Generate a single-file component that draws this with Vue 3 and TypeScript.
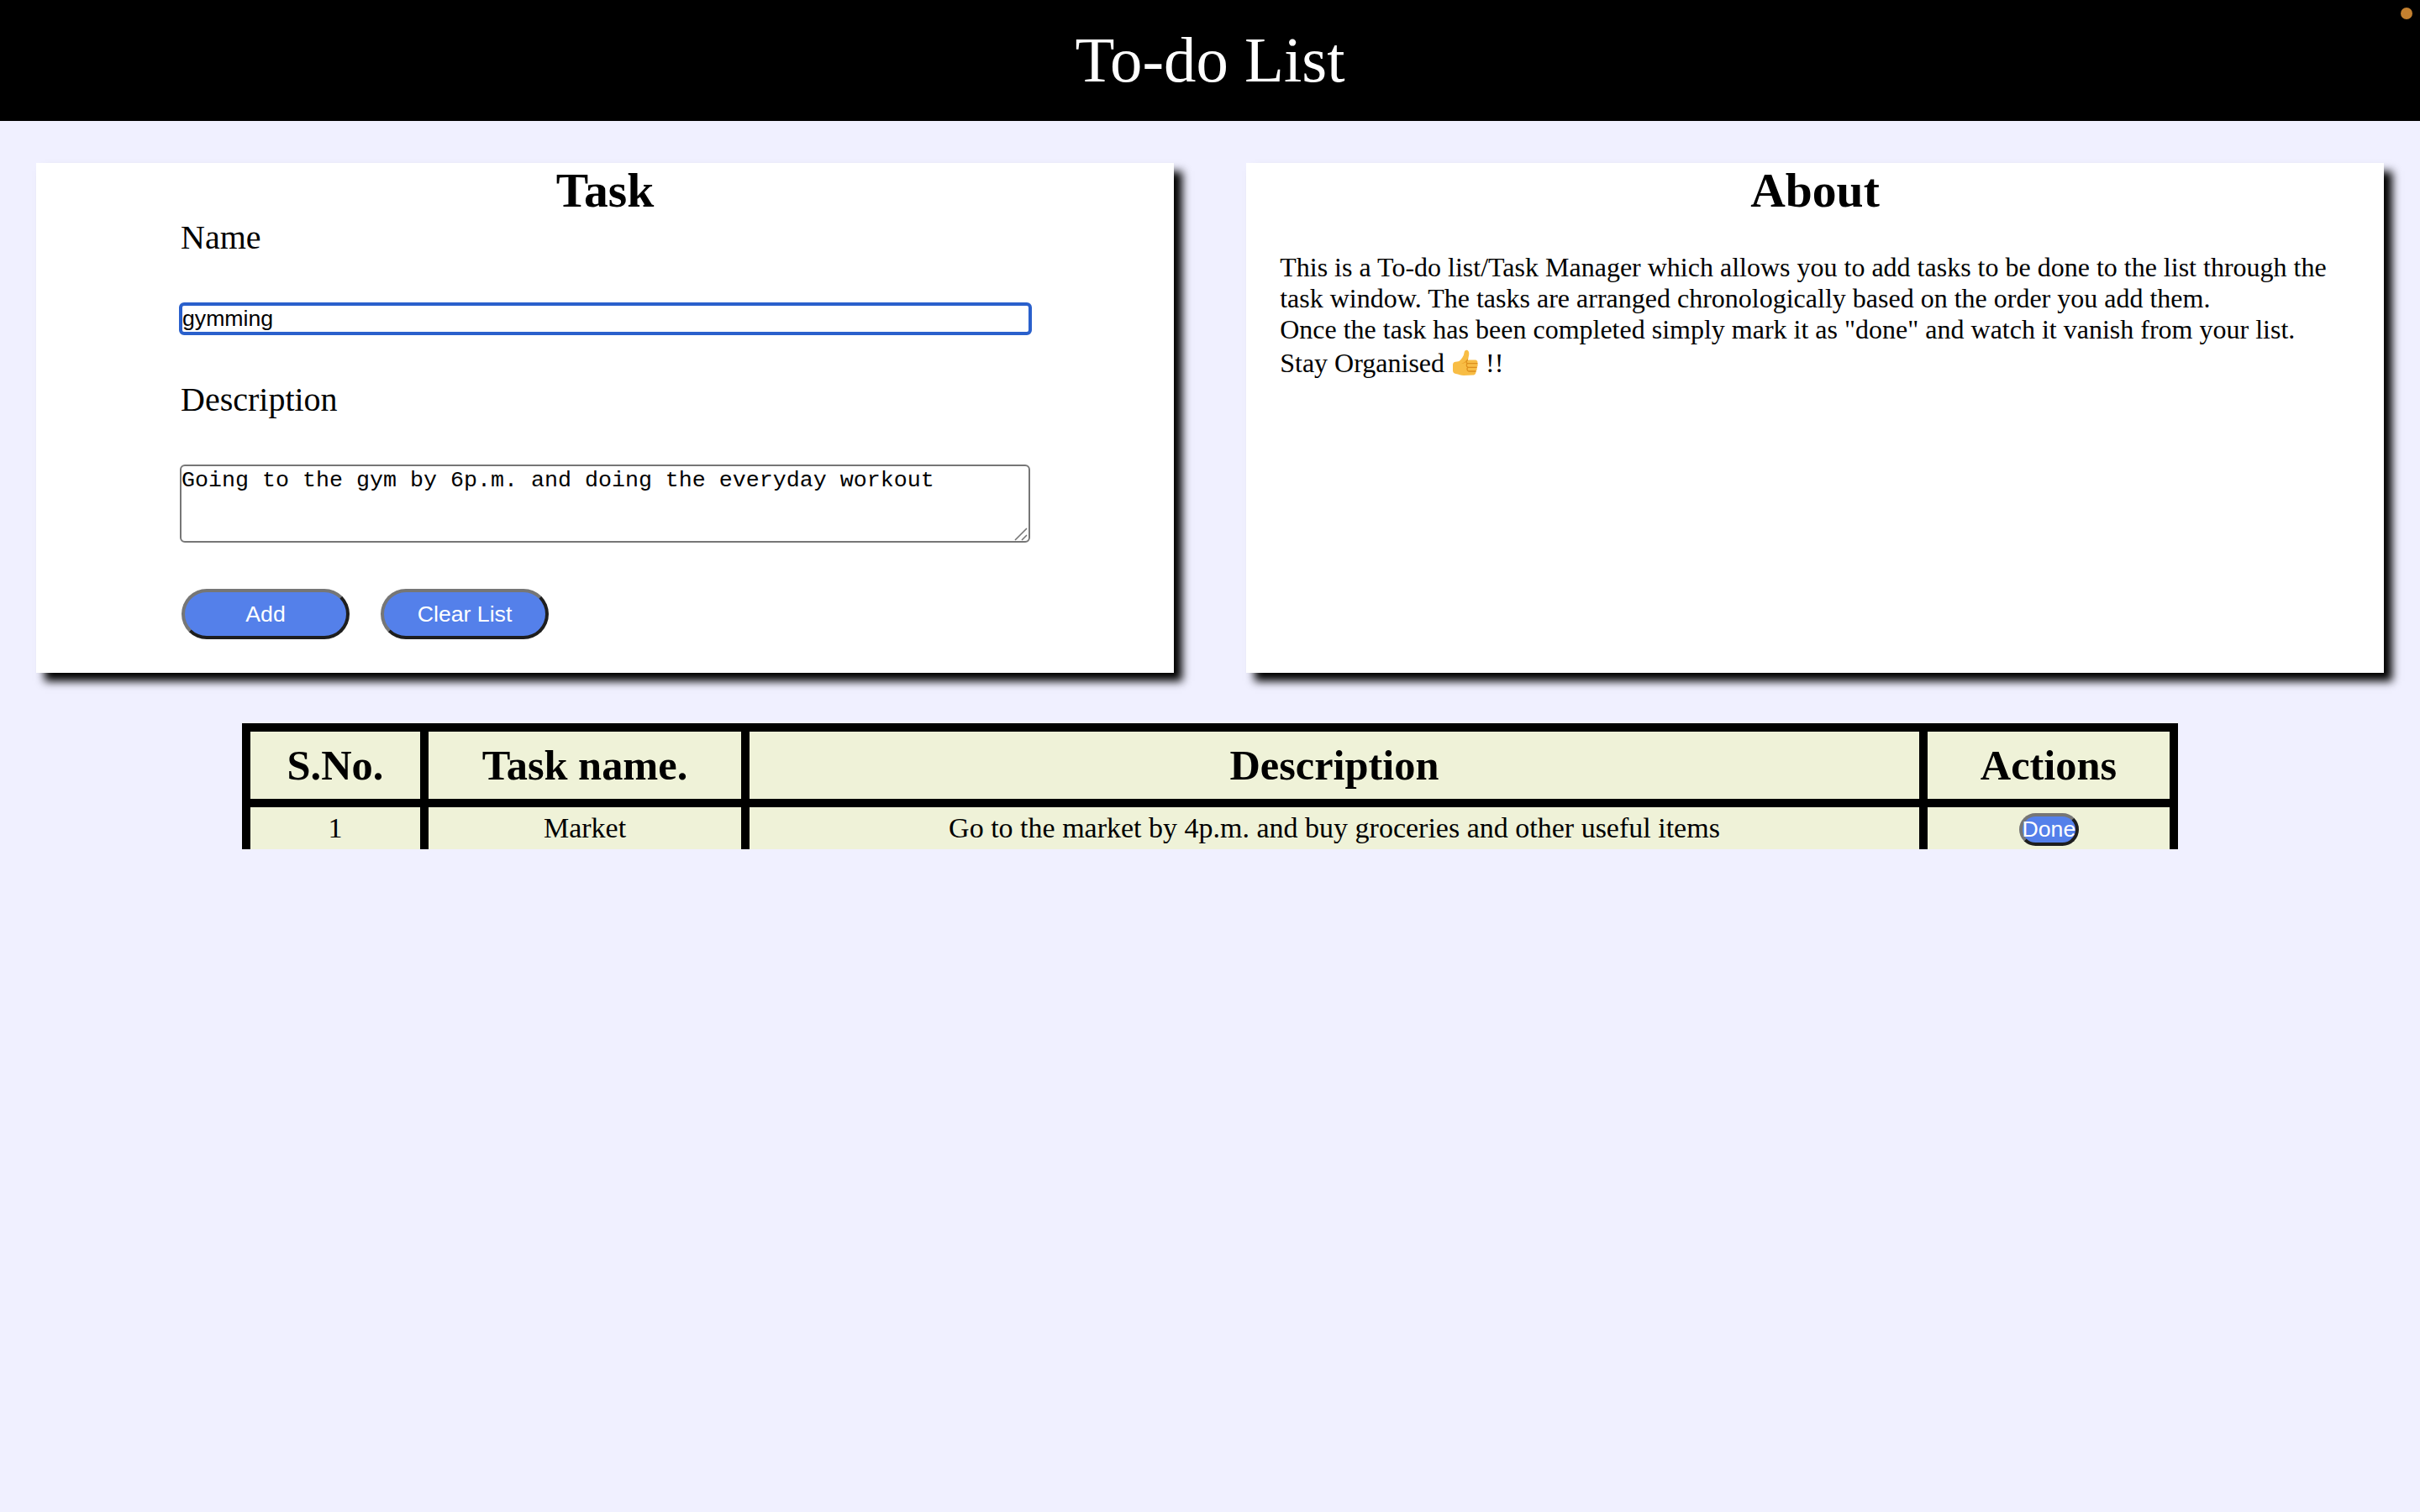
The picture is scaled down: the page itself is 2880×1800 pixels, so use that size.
<script setup lang="ts">
interface Task {
  id: number
  name: string
  description: string
}

const tasks: Task[] = [
  { id: 1, name: 'Market', description: 'Go to the market by 4p.m. and buy groceries and other useful items' }
]
</script>

<template>
  <div class="page">
    <header class="top">
      <h1>To-do List</h1>
      <span class="dot"></span>
    </header>

    <section class="cards">
      <div class="card">
        <h2>Task</h2>
        <form class="form" @submit.prevent>
          <label for="name">Name</label>
          <input id="name" class="name" type="text" value="gymming" />
          <label for="desc">Description</label>
          <div class="desc-box">
            <textarea id="desc" class="desc">Going to the gym by 6p.m. and doing the everyday workout</textarea>
            <svg class="grip" viewBox="0 0 16 16" width="16" height="16" aria-hidden="true">
              <path fill="none" stroke="#767676" stroke-width="1.600" d="M1 15L15 1M9 15L15 9" />
            </svg>
          </div>
          <div class="buttons">
            <button class="pill" type="button">Add</button>
            <button class="pill" type="button">Clear List</button>
          </div>
        </form>
      </div>

      <div class="card">
        <h2>About</h2>
        <p class="about">
          This is a To-do list/Task Manager which allows you to add tasks to be done to the list through the task window. The tasks are arranged chronologically based on the order you add them.<br />
          Once the task has been completed simply mark it as "done" and watch it vanish from your list.
          <span class="stay">Stay Organised
            <svg class="thumb" viewBox="0 0 31 32" width="31" height="32" role="img" aria-label="thumbs up">
              <path fill="#f8bd45" d="M1 18C1 15.500 3 14.500 6 14.500L8.500 14C11.500 11.500 14 8 14.500 4C15 1 17 0 18.800 1.200C20.800 2.600 20.500 6.500 19.500 9.500L18.800 12.500L27 12.500C30 12.500 31 14.500 30.200 16.500C31 18.300 30.800 20.300 29.400 21.300C30.200 23.300 29.600 25 28.300 26C28.900 28.500 27.200 30.500 25 30.500L14 31C10.500 31 8 29.500 4.500 29C2.200 28.500 1 27.200 1 25Z" />
              <path fill="#eea32a" d="M19.500 9.500C17.500 13 15 15.500 11 17C14 17 17 15.500 18.800 12.500Z" />
              <path fill="none" stroke="#dd8f1c" stroke-width="1.300" stroke-linecap="round" d="M18.500 12.800C16.800 13.400 16.500 16 18.500 16.700L30 16.700M18.500 16.700C16.800 17.500 16.800 20.500 19 21.300L29.300 21.300M19 21.300C17.500 22 17.500 25.300 19.800 26L28.200 26" />
            </svg>
            !!</span>
        </p>
      </div>
    </section>

    <section class="table-wrap">
      <table class="list">
        <colgroup>
          <col class="c1" />
          <col class="c2" />
          <col class="c3" />
          <col class="c4" />
        </colgroup>
        <thead>
          <tr>
            <th>S.No.</th>
            <th>Task name.</th>
            <th>Description</th>
            <th>Actions</th>
          </tr>
        </thead>
        <tbody>
          <tr v-for="task in tasks" :key="task.id">
            <td><span class="cell-text">{{ task.id }}</span></td>
            <td><span class="cell-text">{{ task.name }}</span></td>
            <td><span class="cell-text">{{ task.description }}</span></td>
            <td><button class="pill done" type="button">Done</button></td>
          </tr>
        </tbody>
      </table>
    </section>
  </div>
</template>

<style>
html,
body {
  margin: 0;
  background: #f0f0ff;
}
</style>

<style scoped>
.page {
  min-height: 1800px;
  background: #f0f0ff;
  font-family: "Liberation Serif", "Times New Roman", serif;
  color: #000;
}

.top {
  position: relative;
  height: 144px;
  background: #000;
  display: flex;
  align-items: center;
  justify-content: center;
}

.top h1 {
  margin: 0;
  font-size: 76.8px;
  font-weight: 400;
  color: #fff;
}

.dot {
  position: absolute;
  top: 9px;
  right: 9px;
  width: 14px;
  height: 14px;
  border-radius: 50%;
  background: #c4802f;
}

.cards {
  display: flex;
  gap: 86.4px;
  padding: 50px 43.2px 0;
}

.card {
  flex: 1 1 0;
  height: 607px;
  box-sizing: border-box;
  background: #fff;
  box-shadow: 10px 10px 10px #000;
}

.card h2 {
  margin: 0;
  font-size: 57.6px;
  font-weight: 700;
  text-align: center;
}

.form {
  width: 1012px;
  margin: 0 auto;
  display: flex;
  flex-direction: column;
}

.form label {
  font-size: 40px;
  padding-left: 1px;
}

.name {
  box-sizing: border-box;
  width: 1015px;
  height: 39px;
  margin: 54px 0 53px -1px;
  padding: 0;
  border: 4px solid #2a60cc;
  border-radius: 6px;
  outline: none;
  background: #fff;
  font-family: "Liberation Sans", Arial, sans-serif;
  font-size: 26.67px;
  color: #000;
}

.desc-box {
  position: relative;
  height: 93px;
  margin-top: 54px;
}

.desc {
  display: block;
  box-sizing: border-box;
  width: 1012px;
  height: 93px;
  padding: 2px 0;
  border: 2px solid #767676;
  border-radius: 6px;
  background: #fff;
  font-family: "Liberation Mono", "Courier New", monospace;
  font-size: 26.67px;
  color: #000;
  resize: none;
}

.grip {
  position: absolute;
  right: 3px;
  bottom: 2px;
}

.buttons {
  display: flex;
  gap: 37px;
  margin-top: 55px;
  padding-left: 2px;
}

.pill {
  box-sizing: border-box;
  width: 200px;
  height: 60px;
  padding: 0;
  border-style: solid;
  border-width: 4px;
  border-color: #767676 #1e1e1e #1e1e1e #767676;
  border-radius: 30px;
  background: #5480ea;
  font-family: "Liberation Sans", Arial, sans-serif;
  font-size: 26.67px;
  color: #fff;
}

.about {
  margin: 41px 0 0;
  padding: 0 40px;
  font-size: 32px;
}

.stay {
  display: block;
  margin-top: 3px;
}

.thumb {
  vertical-align: -5px;
  margin: 0 1px;
}

.table-wrap {
  width: 2304px;
  height: 150px;
  margin: 60px auto 0;
  overflow: hidden;
}

.list {
  width: 2304px;
  table-layout: fixed;
  border-collapse: separate;
  border-spacing: 10px;
  background: #000;
}

.c1 { width: 202px; }
.c2 { width: 372px; }
.c3 { width: 1392px; }
.c4 { width: 288px; }

.list th,
.list td {
  padding: 0;
  background: #eff2d8;
  text-align: center;
}

.list th {
  height: 80px;
  font-size: 50.4px;
  font-weight: 700;
}

.list td {
  height: 60px;
  font-size: 34px;
  vertical-align: top;
}

.cell-text {
  display: block;
  padding-top: 6px;
}

.done {
  width: 71px;
  height: 39px;
  margin-top: 7px;
  border-radius: 20px;
  display: inline-block;
}
</style>
